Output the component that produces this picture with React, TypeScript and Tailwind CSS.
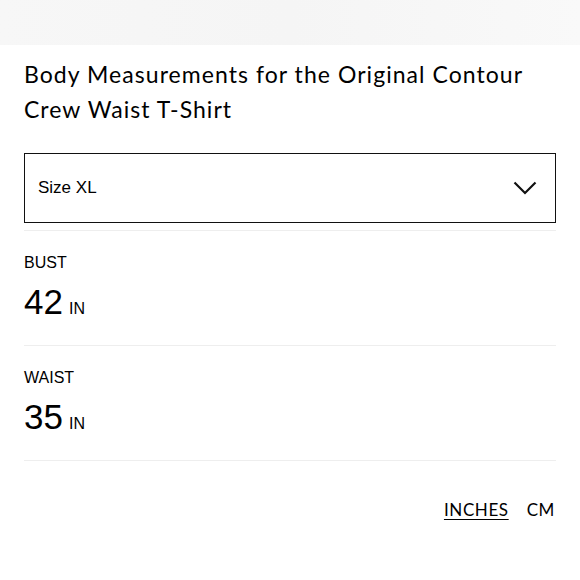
export default function App() {
  const rows = [
    { label: 'BUST', value: '42' },
    { label: 'WAIST', value: '35' },
  ];

  return (
    <div className="w-[580px] h-[580px] bg-white overflow-hidden text-black">
      <div className="h-[45px] bg-gradient-to-r from-[#f7f7f7] via-[#f5f5f5] to-[#f9f9f9]" />
      <div className="px-6">
        <h1 className="mt-[12px] w-[515px] text-[23px] leading-[35px] font-['Lato',sans-serif] tracking-[1.05px]">
          Body Measurements for the Original Contour Crew Waist T-Shirt
        </h1>
        <div className="mt-[26px] h-[70px] border-[1.5px] border-[#111] flex items-center justify-between pl-[13px] pr-[18px]">
          <span className="text-[17px] font-['Liberation_Sans',sans-serif]">Size XL</span>
          <svg width="24" height="14" viewBox="0 0 24 14" fill="none" stroke="#111" strokeWidth="2.2">
            <path d="M1.5 1.5 L12 12 L22.5 1.5" />
          </svg>
        </div>
        <div className="mt-[7px] border-t border-[#eeeeee]" />
        {rows.map((r) => (
          <div key={r.label} className="border-b border-[#eeeeee] pt-[23px] pb-[24px] font-['Liberation_Sans',sans-serif]">
            <div className="text-[16px] leading-[18px]">{r.label}</div>
            <div className="mt-[12px] flex items-baseline gap-[6px]">
              <span className="text-[35px] leading-[36px]">{r.value}</span>
              <span className="text-[16px]">IN</span>
            </div>
          </div>
        ))}
        <div className="mt-[36px] flex justify-end gap-[18px] pr-[1px] text-[17px] font-['Lato',sans-serif] tracking-[0.6px]">
          <span className="underline underline-offset-[3px]">INCHES</span>
          <span>CM</span>
        </div>
      </div>
    </div>
  );
}
